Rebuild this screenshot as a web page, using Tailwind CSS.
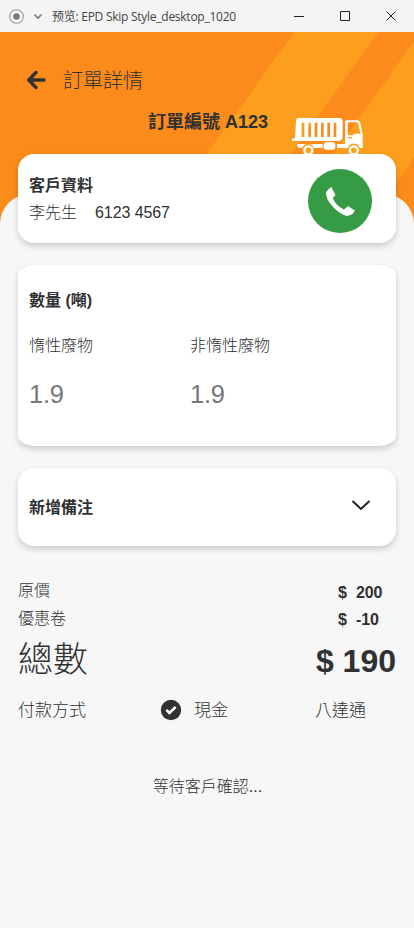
<!DOCTYPE html>
<html lang="zh-Hant">
<head>
<meta charset="utf-8">
<title>訂單詳情</title>
<script src="https://cdn.jsdelivr.net/npm/@tailwindcss/browser@4"></script>
</head>
<body class="w-[414px] h-[928px] overflow-hidden bg-[#f7f7f7] text-[#303132] font-['Liberation_Sans','Noto_Sans_CJK_TC',sans-serif]">
<!-- Window title bar -->
<header class="h-8 flex items-center bg-[#f4f4f4] pl-[9px] text-[#444]">
  <svg class="w-4 h-4" viewBox="0 0 16 16"><circle cx="7.5" cy="8.5" r="6.8" fill="none" stroke="#999" stroke-width="1.1"/><circle cx="7.5" cy="8.5" r="3.2" fill="#777"/></svg>
  <svg class="w-[10px] h-[10px] ml-2" viewBox="0 0 10 10"><path d="M1.5 3.5 5 7l3.5-3.5" fill="none" stroke="#777" stroke-width="1.6"/></svg>
  <span lang="zh-Hans" class="ml-[9px] mt-px w-[190px] whitespace-nowrap text-[12px] leading-4 tracking-[-0.26px] font-['Open_Sans','Noto_Sans_CJK_SC',sans-serif]">预览: EPD Skip Style_desktop_1020</span>
  <svg class="w-[110px] h-4 ml-[48px]" viewBox="0 0 110 16" fill="none" stroke="#222" stroke-width="1"><path d="M4 8.500h10M50.500 3.500h9v9h-9zM96.500 3.500l9 9M105.500 3.500l-9 9"/></svg>
</header>
<main class="relative h-[896px] bg-[#fc8b1c]">
  <!-- Striped backdrop -->
  <svg class="absolute left-0 top-0 w-[414px] h-[200px]" viewBox="0 0 414 200"><path d="M294.500 0H378.500L234.500 200H150.500zM421 0L277 200H363L414 125V0z" fill="#fd9f1e"/></svg>
  <div class="absolute inset-x-0 top-[162px] bottom-0 rounded-t-[30px] bg-[#f7f7f7]"></div>
  <svg class="absolute left-[291px] top-[85px] w-[73px] h-[38px]" viewBox="33 36 219 114">
    <path fill="#fff" fill-rule="evenodd" d="M56 39H177Q188 39 188 49V96Q187 108 175 108H36V103L45 98L48 49Q49 39 56 39zM65 53V96H73V53zM85 53V96H93V53zM104 53V96H112V53zM123 53V96H131V53zM142 53V96H150V53zM161 53V96H169V53z"/>
    <path fill="#fff" d="M52 117H128V129H60Q52 129 52 122z"/>
    <rect x="131" y="112" width="35" height="22" rx="8" fill="#fff"/>
    <path fill="#fff" fill-rule="evenodd" d="M171 117H195V51Q195 46 200 46H232Q239 46 241 54L248 88V129H171zM203 56Q203 52 207 52H229Q234 52 235 57L241 83V86H226Q221 87 217 91H203zM203 96H216V100H203z"/>
    <path d="M66 147V134A18 18 0 0 1 102 134V147zM203 147V134A18 18 0 0 1 240 134V147z" fill="#fd9f1e"/>
    <circle cx="85" cy="136" r="12" fill="none" stroke="#fff" stroke-width="7"/><circle cx="221.500" cy="136" r="12" fill="none" stroke="#fff" stroke-width="7"/>
  </svg>
  <div class="relative px-[18px] pt-[34px]">
    <div class="flex items-center h-7 pl-2">
      <svg class="w-5 h-5" viewBox="0 0 20 20" fill="none" stroke="#303132" stroke-width="3.300" stroke-linecap="round" stroke-linejoin="round"><path d="M18 10H3M10 2.500 2.700 10 10 17.500"/></svg>
      <h1 class="ml-[17px] pt-[2px] text-[20px] leading-7 font-light">訂單詳情</h1>
    </div>
    <h2 class="mt-[15px] h-[26px] pl-[130px] text-[18px] leading-[26px] font-bold whitespace-nowrap">訂單編號 A123</h2>

    <section class="mt-[19px] h-[89px] flex items-center justify-between rounded-[16px] bg-white pl-[11px] pr-6 shadow-[0_3px_6px_rgba(0,0,0,0.18)]">
      <div>
        <h3 class="text-[16px] leading-[27px] font-bold">客戶資料</h3>
        <p class="flex gap-[18px] text-[16px] leading-[27px] font-light"><span>李先生</span><span class="tracking-[-0.08px]">6123 4567</span></p>
      </div>
      <div class="mt-[5px] w-16 h-16 rounded-full bg-[#369b45]">
        <svg class="w-16 h-16" viewBox="0 0 64 64"><path fill="#fff" d="M18.200 23Q20 20 23.300 18L27.500 26L24.700 29Q28 37 36 40.500L40 37L46.800 41.500Q45 46 39 47Q33 46 25 38Q17 29 18.200 23z"/></svg>
      </div>
    </section>

    <section class="mt-[22px] h-[181px] rounded-[18px/10px] bg-white px-[11px] pt-[24px] shadow-[0_3px_6px_rgba(0,0,0,0.18)]">
      <h3 class="text-[16px] leading-6 font-bold">數量 (噸)</h3>
      <div class="mt-[21px] grid grid-cols-[161px_1fr]">
        <div><p class="text-[16px] leading-6 font-light">惰性廢物</p><p class="mt-[19px] text-[25.500px] leading-[34px] text-[#777] tracking-[-0.2px]">1.9</p></div>
        <div><p class="text-[16px] leading-6 font-light">非惰性廢物</p><p class="mt-[19px] text-[25.500px] leading-[34px] text-[#777] tracking-[-0.2px]">1.9</p></div>
      </div>
    </section>

    <section class="mt-[22px] h-[78px] flex items-center justify-between rounded-[16px] bg-white pl-[11px] pr-[25px] shadow-[0_3px_6px_rgba(0,0,0,0.18)]">
      <h3 class="pt-[2px] text-[16px] leading-6 font-bold">新增備注</h3>
      <svg class="w-5 h-3 mb-1" viewBox="0 0 20 12"><path d="M1.500 2 10 10l8.500-8" fill="none" stroke="#222" stroke-width="2"/></svg>
    </section>

    <div class="mt-[31px] flex justify-between">
      <div class="font-light">
        <p class="text-[16px] leading-7">原價</p>
        <p class="text-[16px] leading-7">優惠卷</p>
        <p class="text-[35px] leading-[53px]">總數</p>
      </div>
      <div class="font-bold pt-[2px]">
        <div class="grid grid-cols-[18px_1fr] pl-[22px] text-[16px] leading-[27px]"><span>$</span><span class="tracking-[-0.1px]">200</span><span>$</span><span class="tracking-[-0.1px]">-10</span></div>
        <p class="mt-[2px] text-[32px] leading-[52px]">$ 190</p>
      </div>
    </div>

    <div class="mt-[11px] grid grid-cols-[142px_155px_1fr] text-[17px] leading-6 font-light">
      <span class="pt-px">付款方式</span>
      <span class="flex items-center gap-[12px]"><svg class="mb-[2px] w-[22px] h-[22px]" viewBox="0 0 22 22"><circle cx="11" cy="11" r="10.200" fill="#303132"/><path d="m6.400 10.900 3 3.100 6.200-6" fill="none" stroke="#fff" stroke-width="2.600"/></svg><span class="pt-px">現金</span></span>
      <span class="pt-px">八達通</span>
    </div>
    <p class="mt-[52px] pl-[1px] text-center text-[16px] leading-6 font-light">等待客戶確認...</p>
  </div>
</main>
</body>
</html>
